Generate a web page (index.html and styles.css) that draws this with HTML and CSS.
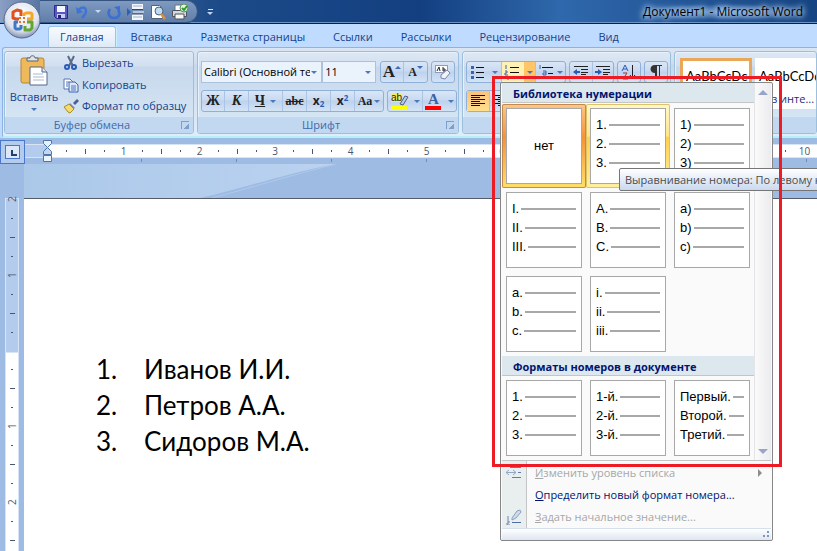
FILE: index.html
```
<!DOCTYPE html>
<html lang="ru">
<head>
<meta charset="UTF-8">
<meta name="viewport" content="width=device-width, initial-scale=1.0">
<title>Документ1 - Microsoft Word</title>
<link rel="stylesheet" href="styles.css">
</head>
<body>
<div class="app">
    <header class="titlebar">
        <div class="quick">
            <button class="qbtn" aria-label="Сохранить">
                <svg width="16" height="16" viewBox="0 0 16 16"><path d="M1.500 1.500h13v13h-11l-2-2z" fill="#5a58c4" stroke="#2c2a86"/><path d="M4 2h8v6H4z" fill="#f4f6ff"/><path d="M4 10h8v4H4z" fill="#c9cdf0"/><path d="M5 11h3v3H5z" fill="#26247a"/></svg>
            </button>
            <button class="qbtn" aria-label="Отменить">
                <svg width="16" height="16" viewBox="0 0 16 16"><path d="M2 3l1 7 6-2z" fill="#3f74d6"/><path d="M4 7c2-4 8-5 8 0 0 3-2 5-4 7" fill="none" stroke="#3f74d6" stroke-width="2.500"/></svg>
            </button>
            <span class="arrow arrow-light"></span>
            <button class="qbtn" aria-label="Повторить">
                <svg width="16" height="16" viewBox="0 0 16 16"><path d="M4 5c-3 4-1 9 4 9s7-4 4-8" fill="none" stroke="#3a70d4" stroke-width="2.500"/><path d="M8 3l6-1v6z" fill="#3a70d4"/></svg>
            </button>
            <button class="qbtn" aria-label="Разрыв страницы">
                <svg width="18" height="18" viewBox="0 0 18 18"><path d="M5 1h11v5H5zM5 11h11v6H5z" fill="#f2f6fc"/><path d="M5 6.500h11M5 11h11" stroke="#33496f"/><path d="M6 3h9M6 14h9" stroke="#9fb0ca"/><path d="M6 9h11" stroke="#fff"/><path d="M0 5l4 4-4 4z" fill="#2d5fb8"/></svg>
            </button>
            <button class="qbtn" aria-label="Просмотр">
                <svg width="16" height="16" viewBox="0 0 16 16"><path d="M1.500 1.500h8l3 3v10h-11z" fill="#fff" stroke="#55657f"/><circle cx="9" cy="7" r="4" fill="#bcdcf5" stroke="#4d6380"/><path d="M11 10l4 5" stroke="#e0913a" stroke-width="2.500"/></svg>
            </button>
            <button class="qbtn" aria-label="Печать">
                <svg width="18" height="16" viewBox="0 0 18 16"><path d="M4 1h8v6H4z" fill="#fff" stroke="#6a7380"/><path d="M1.500 6.500h14v6h-14z" fill="#d5d8dc" stroke="#4e555f"/><path d="M4 10h9v5H4z" fill="#f8f8f4" stroke="#4e555f"/><circle cx="13" cy="4" r="4" fill="#e4f3df" stroke="#5f8f5a"/><path d="M11 4l2 2 3-4" fill="none" stroke="#2c9a2c" stroke-width="2"/></svg>
            </button>
        </div>
        <button class="custom" aria-label="Настройка панели"><span class="custom-line"></span><span class="arrow arrow-light"></span></button>
        <h1 class="caption">Документ1 - Microsoft Word</h1>
    </header>
    <button class="orb" aria-label="Кнопка Office">
        <svg width="40" height="40" viewBox="0 0 40 40">
            <defs><radialGradient id="orbFill" cx="50%" cy="35%" r="65%"><stop offset="0" stop-color="#fff"/><stop offset=".7" stop-color="#dde3ee"/><stop offset="1" stop-color="#8292b3"/></radialGradient></defs>
            <circle cx="20" cy="20" r="18" fill="url(#orbFill)" stroke="#57688f"/>
            <g fill="none" stroke-width="3" stroke-linejoin="round">
                <path d="M19 16v-5l-4-1-4 2v6l3 1h3" stroke="#e2501c"/>
                <path d="M22 16v-2l2-1h5l1 1v5h-5" stroke="#f5a623"/>
                <path d="M16 22h-3v6l1 1h4l1-1v-3" stroke="#3f78c9"/>
                <path d="M25 22h5v6l-2 2h-5v-4" stroke="#62a532"/>
            </g>
            <path d="M17 17h2v2h-2zM21 17h2v2h-2zM17 21h2v2h-2zM21 21h2v2h-2z" fill="#d97828"/>
        </svg>
    </button>
    <nav class="tabs">
        <a href="#" class="tab active">Главная</a>
        <a href="#" class="tab">Вставка</a>
        <a href="#" class="tab">Разметка страницы</a>
        <a href="#" class="tab">Ссылки</a>
        <a href="#" class="tab">Рассылки</a>
        <a href="#" class="tab">Рецензирование</a>
        <a href="#" class="tab">Вид</a>
    </nav>
    <div class="ribbon">
        <section class="group group-clip">
            <div class="group-body clip-body">
                <button class="paste">
                    <svg width="28" height="31" viewBox="0 0 28 31"><rect x="1" y="3" width="23" height="25" rx="2" fill="#eeb95a" stroke="#b98432"/><path d="M7 6V3h3c0-3 5-3 5 0h3v3z" fill="#dfe2e6" stroke="#5c6470"/><path d="M10 12h12l5 5v13H10z" fill="#fff" stroke="#51678f"/><path d="M22 12v5h5" fill="#dbe6f5" stroke="#51678f"/><path d="M13 19h10M13 22h11M13 25h11" stroke="#a9bad4"/></svg>
                    <span>Вставить</span>
                    <span class="arrow"></span>
                </button>
                <div class="clip-list">
                    <button class="clip-item"><svg width="16" height="16" viewBox="0 0 16 16"><path d="M5 1l5 10M11 1L6 11" stroke="#5b6c86" stroke-width="2"/><circle cx="4" cy="12" r="2" fill="none" stroke="#2a5cb4" stroke-width="2"/><circle cx="11" cy="12" r="2" fill="none" stroke="#2a5cb4" stroke-width="2"/></svg>Вырезать</button>
                    <button class="clip-item"><svg width="16" height="16" viewBox="0 0 16 16"><path d="M1 2h6l3 3v7H1z" fill="#fff" stroke="#5577b5"/><path d="M6 5h6l3 3v7H6z" fill="#dde9fa" stroke="#3c63ad"/><path d="M8 9h5M8 11h5M8 13h5M3 5h3M3 7h2M3 9h2" stroke="#4a74be"/></svg>Копировать</button>
                    <button class="clip-item"><svg width="16" height="16" viewBox="0 0 16 16"><path d="M10 5l4-4 2 2-4 4z" fill="#4a5f94"/><path d="M7 5l5 5-2 1-4-4z" fill="#7d84a6"/><path d="M6 6l5 5-4 4-2-1-4-5z" fill="#f3dc6c" stroke="#a98b2e"/></svg>Формат по образцу</button>
                </div>
            </div>
            <div class="group-name">Буфер обмена<button class="launcher" aria-label="Буфер обмена"></button></div>
        </section>
        <section class="group group-font">
            <div class="group-body">
                <div class="row">
                    <div class="combo combo-font"><select aria-label="Шрифт"><option>Calibri (Основной текст)</option></select><span class="arrow"></span></div>
                    <div class="combo combo-size"><select aria-label="Размер"><option>11</option></select><span class="arrow"></span></div>
                    <div class="set set-after-combo">
                        <button class="tool serif big">A<i class="up"></i></button>
                        <button class="tool serif small">A<i class="down"></i></button>
                    </div>
                    <div class="set">
                        <button class="tool" aria-label="Очистить формат"><svg width="18" height="18" viewBox="0 0 18 18"><rect x="1.500" y="2.500" width="12" height="7" fill="#fff" stroke="#8b9bb8"/><path d="M3 8l2-4 1 4M9 4v4h2V6H9" fill="none" stroke="#223"/><path d="M7 12l6-5 3 3-5 6-4-1z" fill="#f1f2fa" stroke="#7a86a8"/></svg></button>
                    </div>
                </div>
                <div class="row">
                    <div class="set">
                        <button class="tool serif bold">Ж</button>
                        <button class="tool serif italic">К</button>
                        <button class="tool serif wide"><u>Ч</u><span class="arrow"></span></button>
                        <button class="tool serif small"><s>abc</s></button>
                        <button class="tool bold">x<sub>2</sub></button>
                        <button class="tool bold">x<sup>2</sup></button>
                        <button class="tool serif case">Aa<span class="arrow"></span></button>
                    </div>
                    <div class="set">
                        <button class="tool wide" aria-label="Цвет выделения"><svg width="18" height="18" viewBox="0 0 18 18"><path d="M0 1h10v9H0z" fill="#f7ec5e"/><text x="0" y="9" class="ab">ab</text><path d="M9 12l5-8 3 1-5 8z" fill="#b9c8e4" stroke="#4c5f87"/><path d="M0 14h16v4H0z" fill="#ff0"/></svg><span class="arrow"></span></button>
                        <button class="tool wide" aria-label="Цвет текста"><svg width="18" height="18" viewBox="0 0 18 18"><text x="3" y="12" class="letter">A</text><path d="M0 14h16v4H0z" fill="#f00"/></svg><span class="arrow"></span></button>
                    </div>
                </div>
            </div>
            <div class="group-name">Шрифт<button class="launcher" aria-label="Шрифт"></button></div>
        </section>
        <section class="group group-par">
            <div class="group-body">
                <div class="row">
                    <div class="set">
                        <button class="tool list" aria-label="Маркеры"><svg width="16" height="16" viewBox="0 0 16 16"><path d="M1 2h3v3H1zM1 7h3v3H1zM1 12h3v3H1z" fill="#3c62ab"/><path d="M6 3.500h8M6 8.500h8M6 13.500h8" stroke="#111"/></svg><span class="arrow"></span></button>
                        <button class="tool list hot" aria-label="Нумерация"><svg width="16" height="16" viewBox="0 0 16 16"><path d="M2 1v4M1 7h2v2H1v2h3M1 13h3v3" fill="none" stroke="#3c62ab"/><path d="M6 3.500h9M6 8.500h9M6 13.500h9" stroke="#111"/></svg><span class="arrow"></span></button>
                        <button class="tool multi" aria-label="Многоуровневый список"><svg width="16" height="16" viewBox="0 0 16 16"><path d="M2 1v4M5 7h3v4H5V9h3M11 12v3" fill="none" stroke="#3c62ab"/><path d="M4 3.500h11M10 9.500h5M13 14.500h3" stroke="#111"/></svg><span class="arrow"></span></button>
                    </div>
                    <div class="set">
                        <button class="tool" aria-label="Уменьшить отступ"><svg width="16" height="16" viewBox="0 0 16 16"><path d="M1 2.500h14M8 5.500h7M8 8.500h7M8 10.500h5M1 13.500h12" stroke="#222"/><path d="M0 8l4-3v2h3v2H4v2z" fill="#2a5bb5"/></svg></button>
                        <button class="tool" aria-label="Увеличить отступ"><svg width="16" height="16" viewBox="0 0 16 16"><path d="M1 2.500h14M8 5.500h7M8 8.500h7M8 10.500h5M1 13.500h12" stroke="#222"/><path d="M7 8L3 5v2H0v2h3v2z" fill="#2a5bb5"/></svg></button>
                    </div>
                    <div class="set">
                        <button class="tool" aria-label="Сортировка"><svg width="16" height="16" viewBox="0 0 16 16"><path d="M1 7l3-6 3 6M2 5h4" fill="none" stroke="#2a5bb5"/><path d="M2 9h4l-4 6h5" fill="none" stroke="#a3352f"/><path d="M11.500 1v13M9 11l2.500 3 2.500-3" fill="none" stroke="#222"/></svg></button>
                    </div>
                    <div class="set">
                        <button class="tool" aria-label="Знаки абзаца"><svg width="14" height="16" viewBox="0 0 14 16"><path d="M6 9C0 9 0 1 6 1h7v1h-2v13h-1V2H8v13H6z" fill="#333"/></svg></button>
                    </div>
                </div>
                <div class="row">
                    <div class="set">
                        <button class="tool pressed" aria-label="По левому краю"><svg width="16" height="14" viewBox="0 0 16 14"><path d="M1 1.500h14M1 3.500h9M1 5.500h14M1 7.500h9M1 9.500h14M1 11.500h9" stroke="#111"/></svg></button>
                        <button class="tool" aria-label="По центру"><svg width="16" height="14" viewBox="0 0 16 14"><path d="M1 1.500h14M4 3.500h8M1 5.500h14M4 7.500h8M1 9.500h14M4 11.500h8" stroke="#111"/></svg></button>
                    </div>
                </div>
            </div>
            <div class="group-name"></div>
        </section>
        <section class="group group-styles">
            <div class="styles-list">
                <button class="style selected"><span class="sample">AaBbCcDc</span></button>
                <button class="style"><span class="sample">AaBbCcDd</span><span>Без инте...</span></button>
            </div>
            <div class="group-name"></div>
        </section>
    </div>

    <div class="ruler">
        <button class="tabstop" aria-label="Табуляция"><span></span></button>
        <div class="ruler-main">
            <div class="ruler-scale" id="hRuler"></div>
            <div class="ruler-tabs"></div>
            <svg class="indent" width="9" height="22" viewBox="0 0 9 22"><path d="M.5.500h8v3l-4 4-4-4z" fill="#e8f0fa" stroke="#4f76ac"/><path d="M4.500 7.500l4 4v3h-8v-3z" fill="#c5d6ec" stroke="#4f76ac"/><path d="M.5 15.500h8v6h-8z" fill="#eef2fa" stroke="#4f76ac"/></svg>
        </div>
    </div>

    <main class="workspace">
        <aside class="vruler">
            <div class="vpart vmargin" id="vMargin"></div>
            <div class="vpart vbody" id="vBody"></div>
        </aside>
        <div class="canvas">
            <svg class="swoosh" width="320" height="34" viewBox="0 0 320 34"><defs><linearGradient id="sweep" x1="0" x2="1"><stop offset="0" stop-color="#abc8e9"/><stop offset="1" stop-color="#bbd2f0"/></linearGradient></defs><path d="M0 0h312C260 10 220 24 176 34H0z" fill="url(#sweep)"/><path d="M312 0C264 12 226 24 188 34" fill="none" stroke="#afc9ec"/></svg>
            <div class="paper">
                <ol class="names">
                    <li><span class="num">1.</span>Иванов И.И.</li>
                    <li><span class="num">2.</span>Петров А.А.</li>
                    <li><span class="num">3.</span>Сидоров М.А.</li>
                </ol>
            </div>
        </div>
    </main>

    <div class="panel">
        <div class="gallery">
            <div class="gallery-main">
                <h2>Библиотека нумерации</h2>
                <div class="cells">
                    <button class="cell current"><span class="none">нет</span></button>
                    <button class="cell hover"><span class="card"><span class="line">1.</span><span class="line">2.</span><span class="line">3.</span></span></button>
                    <button class="cell"><span class="card"><span class="line">1)</span><span class="line">2)</span><span class="line">3)</span></span></button>
                    <button class="cell"><span class="card"><span class="line">I.</span><span class="line">II.</span><span class="line">III.</span></span></button>
                    <button class="cell"><span class="card"><span class="line">A.</span><span class="line">B.</span><span class="line">C.</span></span></button>
                    <button class="cell"><span class="card"><span class="line">a)</span><span class="line">b)</span><span class="line">c)</span></span></button>
                    <button class="cell"><span class="card"><span class="line">a.</span><span class="line">b.</span><span class="line">c.</span></span></button>
                    <button class="cell"><span class="card"><span class="line">i.</span><span class="line">ii.</span><span class="line">iii.</span></span></button>
                </div>
                <h2>Форматы номеров в документе</h2>
                <div class="cells">
                    <button class="cell"><span class="card"><span class="line">1.</span><span class="line">2.</span><span class="line">3.</span></span></button>
                    <button class="cell"><span class="card"><span class="line">1-й.</span><span class="line">2-й.</span><span class="line">3-й.</span></span></button>
                    <button class="cell"><span class="card"><span class="line">Первый.</span><span class="line">Второй.</span><span class="line">Третий.</span></span></button>
                </div>
            </div>
            <div class="scroll"><span class="scroll-up"></span><span class="scroll-down"></span></div>
        </div>
        <div class="menu">
            <button class="menu-item" disabled><span class="menu-icon"><svg width="16" height="16" viewBox="0 0 16 16"><path d="M4 2.500h11M12 7.500h3M6 12.500h9" stroke="#5f7fae"/><path d="M3 5L0 7.500 3 10M0 7.500h10M7 5l3 2.500L7 10" fill="none" stroke="#93a9c8"/></svg></span><span><u>И</u>зменить уровень списка</span><span class="submenu"></span></button>
            <button class="menu-item"><span class="menu-icon"></span><span><u>О</u>пределить новый формат номера...</span></button>
            <button class="menu-item" disabled><span class="menu-icon"><svg width="16" height="16" viewBox="0 0 16 16"><path d="M6 9l5-7 3-1 1 2-5 6-4 2z" fill="#cfdaea" stroke="#8ba0c1"/><path d="M2 7v4M1 12h2v2H1v2h3" fill="none" stroke="#6c85ae"/><path d="M6 13.500h9" stroke="#4d6fa5"/></svg></span><span><u>З</u>адать начальное значение...</span></button>
        </div>
        <div class="grip"><svg width="8" height="8" viewBox="0 0 8 8"><path d="M4 0h2v2H4zM0 4h2v2H0zM4 4h2v2H4z" fill="#7f96bf"/></svg></div>
    </div>
    <div class="tooltip" role="tooltip">Выравнивание номера: По левому краю</div>
    <div class="frame"></div>
</div>

<script>
    const STEP = 19;
    const types = ['dot', 'half', 'dot', 'unit'];
    const hRuler = document.getElementById('hRuler');
    const vMargin = document.getElementById('vMargin');
    const vBody = document.getElementById('vBody');

    function addMark(parent, index) {
        const mark = document.createElement('span');
        mark.className = types[(index - 1) % 4];
        if (index % 4 === 0) {
            mark.textContent = index / 4;
        }
        parent.appendChild(mark);
    }

    function fillRuler(parent, length) {
        const count = Math.floor(length / STEP);
        for (let i = 1; i <= count; i++) {
            addMark(parent, i);
        }
    }

    fillRuler(hRuler, hRuler.clientWidth - 32);
    fillRuler(vBody, vBody.clientHeight - 7);

    // the margin part counts up from the page text
    for (let i = 8; i > 0; i--) {
        addMark(vMargin, i);
    }
</script>
</body>
</html>
```
FILE: styles.css
```
* {
    box-sizing: border-box;
}
body {
    margin: 0;
    font-family: "Open Sans", "Noto Sans", sans-serif;
    font-size: 11px;
    line-height: 16px;
    color: #15428b;
}
button {
    margin: 0;
    padding: 0;
    border: none;
    background: none;
    font: inherit;
    color: inherit;
}
.app {
    position: relative;
    display: flex;
    flex-direction: column;
    height: 100vh;
    overflow: hidden;
    background-color: #bfdbff;
}
svg {
    flex: none;
}
.arrow {
    flex: none;
    border: 3px solid transparent;
    border-top-color: #4a78b8;
    border-bottom: none;
}
.arrow-light {
    border-top-color: #c3d7f2;
}

/* title bar */
.titlebar {
    display: flex;
    align-items: center;
    flex: none;
    height: 24px;
    background: linear-gradient(to right, #8c9fc4 0, #53719f 44px, #1c4a88 220px, #133f80 420px, #2f68ac 560px, #164381 100%);
    border-bottom: 1px solid #10203c;
    box-shadow: inset 0 -1px #6d93c5;
}
.quick {
    display: flex;
    align-items: center;
    gap: 5px;
    height: 23px;
    margin-left: 40px;
    padding: 0 8px 0 13px;
    border: 1px solid #35547f;
    border-left: none;
    border-radius: 0 12px 12px 0;
    background: linear-gradient(#7f9ac0, #5f7ea9);
}
.qbtn {
    display: flex;
}
.custom {
    display: flex;
    flex-direction: column;
    align-items: center;
    gap: 2px;
    margin-left: 9px;
}
.custom-line {
    width: 5px;
    height: 1px;
    background-color: #d5e2f5;
}
.caption {
    margin: 0 8px 0 auto;
    padding: 0 6px;
    font-size: 12px;
    font-weight: normal;
    color: #000;
    background: radial-gradient(closest-side, rgba(150, 185, 225, 0.7), rgba(150, 185, 225, 0));
    text-shadow: 0 0 5px #b9d4f2, 0 0 6px #b9d4f2, 0 0 8px #b9d4f2;
}
.orb {
    position: absolute;
    top: 0;
    left: 2px;
    z-index: 2;
}

/* tabs */
.tabs {
    display: flex;
    flex: none;
    height: 23px;
    padding: 2px 0 0 48px;
}
.tab {
    height: 21px;
    padding: 3px 16px 0 12px;
    color: #15428b;
    text-decoration: none;
}
.tab.active {
    margin-right: 3px;
    padding: 2px 11px 0;
    border: 1px solid #9dc4ee;
    border-bottom: none;
    border-radius: 3px 3px 0 0;
    background: linear-gradient(#f8fbff, #dfeaf7);
    box-shadow: 1px 0 #c8f0fa;
}

/* ribbon */
.ribbon {
    display: flex;
    flex: none;
    gap: 3px;
    height: 91px;
    margin-left: 2px;
    padding: 3px 0 2px 1px;
    border: 1px solid #8db2e3;
    border-right: none;
    border-bottom: 2px solid #b5effa;
    border-radius: 3px 0 0 3px;
    background: linear-gradient(#dbe6f4, #cfddef 16px, #c7d8ed 17px, #e0edf9);
}
.group {
    display: flex;
    flex-direction: column;
    flex: none;
    overflow: hidden;
    border: 1px solid #9cbfdd;
    border-radius: 3px;
    background: linear-gradient(#dee8f5, #d1dff0 14px, #c7d8ed 15px, #d8e8f5);
    box-shadow: inset 1px 1px #e8f0fa;
}
.group-clip {
    width: 190px;
}
.group-font {
    width: 262px;
}
.group-par {
    width: 209px;
}
.group-styles {
    flex: 1;
    min-width: 0;
}
.group-body {
    flex: 1;
    min-height: 0;
    padding: 9px 3px 0;
}
.group-name {
    position: relative;
    flex: none;
    height: 16px;
    text-align: center;
    line-height: 15px;
    color: #3e6aaa;
    background-color: #c1d8f0;
    padding-right: 14px;
}
.launcher {
    position: absolute;
    right: 4px;
    top: 4px;
    width: 8px;
    height: 8px;
    border-top: 1px solid #7d9fcb;
    border-left: 1px solid #7d9fcb;
    background: linear-gradient(135deg, transparent 60%, #7d9fcb 60%);
}
.clip-body {
    display: flex;
    gap: 4px;
    padding: 0 4px;
}
.paste {
    display: flex;
    flex-direction: column;
    align-items: center;
    gap: 3px;
    width: 50px;
    padding-top: 3px;
}
.clip-list {
    display: flex;
    flex-direction: column;
}
.clip-item {
    display: flex;
    align-items: center;
    gap: 3px;
    height: 22px;
    white-space: nowrap;
}
.row {
    display: flex;
    gap: 3px;
    height: 22px;
    margin-bottom: 7px;
}
.combo {
    position: relative;
    display: flex;
    align-items: center;
    border: 1px solid #abc1de;
    background-color: #eaf2fb;
}
.combo select {
    width: 100%;
    padding: 0 11px 0 2px;
    border: none;
    appearance: none;
    background: none;
    font: inherit;
    color: #000;
}
.combo .arrow {
    position: absolute;
    right: 4px;
}
.combo-font {
    width: 124px;
}
.combo-size {
    width: 55px;
    margin-left: -3px;
}
.set {
    display: flex;
    border: 1px solid #8fb0d9;
    border-radius: 3px;
    background: linear-gradient(#d9e6f6, #c9daf0 9px, #bdd2ed 10px, #d3e3f6);
}
.set-after-combo {
    margin-left: 1px;
}
.tool {
    display: flex;
    align-items: center;
    justify-content: center;
    min-width: 22px;
    font-size: 12px;
    color: #222;
}
.tool + .tool {
    border-left: 1px solid #a9c4e4;
    min-width: 24px;
}
.set + .set .tool + .tool {
    min-width: 21px;
}
.tool.wide {
    width: 34px;
    gap: 5px;
}
.tool.list {
    width: 34px;
    gap: 6px;
}
.tool.multi {
    width: 30px;
    gap: 3px;
}
.tool.serif {
    font-family: "Liberation Serif", serif;
    font-size: 14px;
    font-weight: bold;
}
.tool.serif.big {
    font-size: 17px;
}
.tool.serif.small {
    font-size: 12px;
}
.tool.serif.case {
    width: 29px;
    gap: 2px;
    font-size: 12px;
}
.bold {
    font-weight: bold;
}
.italic {
    font-style: italic;
}
.tool sub,
.tool sup {
    font-size: 8px;
    line-height: 8px;
    color: #2a5bb5;
}
.tool sub {
    align-self: flex-end;
    padding-bottom: 3px;
}
.tool sup {
    align-self: flex-start;
    padding-top: 3px;
}
.up,
.down {
    align-self: flex-start;
    margin-top: 4px;
    border: 3px solid transparent;
}
.up {
    border-top: none;
    border-bottom-color: #3e6bb5;
}
.down {
    border-bottom: none;
    border-top-color: #3e6bb5;
}
.ab {
    font: 10px "Liberation Sans", sans-serif;
    fill: #222;
}
.letter {
    font: bold 15px "Liberation Serif", serif;
    fill: #3c62ab;
}
.tool.hot {
    gap: 7px;
    background: linear-gradient(to right, #fff1b5 22px, #ffc566 22px);
}
.tool.pressed {
    background: linear-gradient(#fbc27c, #ffdf8c);
}
.styles-list {
    display: flex;
    flex: 1;
    gap: 3px;
    padding: 6px 0 8px 5px;
}
.style {
    display: flex;
    flex-direction: column;
    flex: none;
    width: 72px;
    padding: 9px 0 0 4px;
    overflow: hidden;
    text-align: left;
    white-space: nowrap;
    color: #1e2a78;
    background-color: #fff;
}
.style.selected {
    padding: 6px 0 0 3px;
    border: 3px solid #e9a75a;
}
.sample {
    height: 24px;
    font-family: Lato, sans-serif;
    font-size: 13px;
    line-height: 18px;
    color: #000;
}

/* rulers */
.ruler {
    display: flex;
    flex: none;
    height: 26px;
    padding-top: 2px;
    background-color: #9dbbe3;
}
.tabstop {
    display: flex;
    width: 25px;
    height: 24px;
    padding: 4px;
    border: 1px solid #4a77cc;
    background-color: #b3cbed;
}
.tabstop span {
    flex: 1;
    border: 1px solid #4a77cc;
    background: linear-gradient(#23406b, #23406b) 5px 4px / 2px 6px no-repeat, linear-gradient(#23406b, #23406b) 5px 8px / 6px 2px no-repeat, #dce8f8;
}
.ruler-main {
    position: relative;
    flex: 1;
    min-width: 0;
    padding-top: 4px;
}
.ruler-scale {
    display: flex;
    align-items: center;
    height: 14px;
    padding-left: 32px;
    border-top: 1px solid #d6e4f6;
    border-bottom: 1px solid #d6e4f6;
    background: linear-gradient(to right, #b3cbed 22px, #fff 22px);
}
.ruler-scale span {
    display: flex;
    flex: none;
    align-items: center;
    justify-content: center;
    width: 19px;
    font-size: 10px;
    line-height: 12px;
    color: #4a5670;
}
.ruler-scale span:nth-child(12n) {
    width: 18px;
}
.dot::before,
.half::before {
    content: "";
    width: 1px;
    height: 2px;
    background-color: #4a5670;
}
.half::before {
    height: 5px;
}
.ruler-tabs {
    height: 3px;
    margin: 1px 0 0 22px;
    background: repeating-linear-gradient(to right, transparent 0, transparent 94px, #7b8aa3 94px, #7b8aa3 95px);
}
.indent {
    position: absolute;
    left: 18px;
    top: 0;
}
.workspace {
    display: flex;
    flex: 1;
    min-height: 0;
    background-color: #9dbbe3;
}
.vruler {
    display: flex;
    flex-direction: column;
    flex: none;
    width: 24px;
    padding: 34px 5px 0;
}
.vpart {
    display: flex;
    flex-direction: column;
    align-items: center;
    border: 1px solid #d6e4f6;
    border-bottom: none;
}
.vmargin {
    flex: none;
    justify-content: flex-end;
    height: 154px;
    padding-bottom: 10px;
    background-color: #b3cbed;
}
.vbody {
    flex: 1;
    padding-top: 7px;
    background-color: #fff;
}
.vpart span {
    display: flex;
    flex: none;
    align-items: center;
    justify-content: center;
    width: 12px;
    height: 19px;
    font-size: 10px;
    line-height: 12px;
    color: #4a5670;
}
.vpart .unit {
    writing-mode: vertical-rl;
    transform: rotate(180deg);
}
.vpart .dot::before {
    width: 2px;
    height: 1px;
}
.vpart .half::before {
    width: 5px;
    height: 1px;
}
.canvas {
    display: flex;
    flex-direction: column;
    flex: 1;
    min-width: 0;
}
.paper {
    flex: 1;
    border-top: 1px solid #555d6b;
    background-color: #fff;
}
.names {
    margin: 152px 0 0;
    padding: 0 0 0 72px;
    list-style: none;
    font-family: Lato, "Open Sans", sans-serif;
    font-size: 26px;
    line-height: 36px;
    color: #000;
}
.names li {
    display: flex;
}
.num {
    width: 48px;
}

/* numbering drop-down */
.panel {
    position: absolute;
    top: 82px;
    left: 500px;
    width: 273px;
    padding: 0 1px;
    border: 1px solid #868686;
    border-radius: 2px;
    background-color: #fafafa;
    color: #00156e;
}
.gallery {
    display: flex;
    border-bottom: 1px solid #c5c5c5;
}
.gallery-main {
    width: 252px;
}
.panel h2 {
    margin: 0 0 1px;
    height: 20px;
    padding-left: 11px;
    border-bottom: 1px solid #c5c5c5;
    background-color: #dde7ee;
    font-size: 11px;
    line-height: 21px;
    white-space: nowrap;
}
.panel .cells + h2 {
    margin: 0;
}
.cells {
    display: grid;
    grid-template-columns: repeat(3, 84px);
    grid-auto-rows: 84px;
}
.cell {
    display: flex;
    padding: 4px;
    border-radius: 2px;
    font-family: "Liberation Sans", sans-serif;
    font-size: 13px;
    color: #000;
}
.current {
    background: linear-gradient(#fbc88a, #f5933a 40%, #ffe069);
    box-shadow: inset 0 0 0 1px #c28a4e;
}
.hover {
    background: linear-gradient(#fff8c8, #ffe58a 38%, #ffd04a 40%, #fff0a0);
    box-shadow: inset 0 0 0 1px #dcc26a;
}
.card,
.none {
    flex: 1;
    display: flex;
    flex-direction: column;
    height: 76px;
    padding: 6px 5px 0;
    border: 1px solid #a8a8a8;
    background-color: #fff;
}
.none {
    align-items: center;
    justify-content: center;
    padding: 0;
}
.line {
    display: flex;
    align-items: center;
    gap: 2px;
    line-height: 19px;
}
.line::after {
    content: "";
    flex: 1;
    height: 2px;
    background-color: #a8a8a8;
}
.scroll {
    display: flex;
    flex-direction: column;
    align-items: center;
    justify-content: space-between;
    flex: 1;
    padding: 7px 0 6px;
    border-left: 1px solid #e4e4e8;
    background: linear-gradient(to right, #fafafa, #ececf0);
}
.scroll-up,
.scroll-down {
    border: 5px solid transparent;
}
.scroll-up {
    border-top: none;
    border-bottom-color: #98a5c9;
}
.scroll-down {
    border-bottom: none;
    border-top-color: #98a5c9;
}
.menu {
    display: flex;
    flex-direction: column;
    padding-top: 1px;
    background: linear-gradient(to right, #e9eeee 24px, #c5c5c5 24px, #c5c5c5 25px, #fafafa 25px);
}
.menu-item {
    display: flex;
    align-items: center;
    height: 22px;
    color: #00156e;
}
.menu-item:disabled {
    color: #a7a7a7;
}
.menu-icon {
    display: flex;
    width: 33px;
    padding-left: 4px;
}
.submenu {
    margin: 0 9px 0 auto;
    border: 4px solid transparent;
    border-left-color: #8d8d8d;
    border-right: none;
}
.grip {
    display: flex;
    align-items: flex-end;
    justify-content: flex-end;
    height: 12px;
    padding-bottom: 1px;
    border-top: 1px solid #d5e2ee;
    background: linear-gradient(#fff, #dde6f1);
}
.tooltip {
    position: absolute;
    top: 168px;
    left: 619px;
    height: 23px;
    padding: 0 5px;
    border: 1px solid #767676;
    border-radius: 2px;
    background: linear-gradient(#fff, #c9d9ef);
    line-height: 22px;
    white-space: nowrap;
    color: #4c4c4c;
}
.frame {
    position: absolute;
    top: 76px;
    left: 492px;
    width: 290px;
    height: 391px;
    border: 3px solid #ed1c24;
    pointer-events: none;
}
```
